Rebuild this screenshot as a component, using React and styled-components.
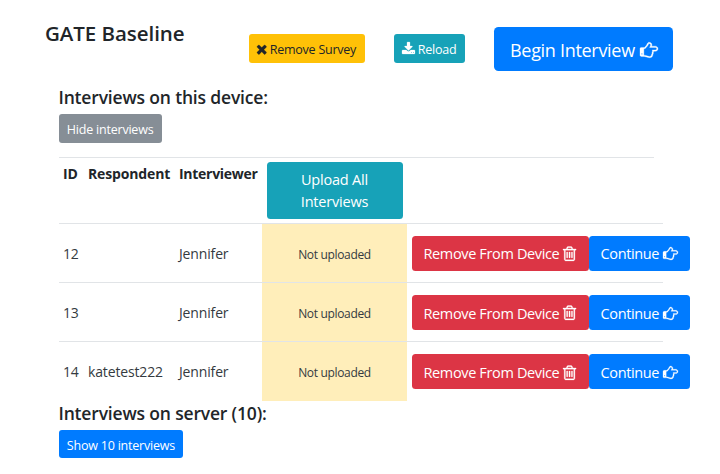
import React from "react";
import styled, { createGlobalStyle } from "styled-components";

const GlobalStyle = createGlobalStyle`
  * { box-sizing: border-box; }
  body {
    margin: 0;
    background: #fff;
    color: #212529;
    font-family: "Open Sans", "Noto Sans", sans-serif;
  }
`;

const Page = styled.main`
  width: 720px;
  height: 474px;
  overflow: hidden;
`;

const Header = styled.header`
  display: flex;
  align-items: flex-start;
  height: 87px;
  padding: 26px 0 0 45px;
`;

const Title = styled.h1`
  width: 204px;
  margin: -5px 0 0;
  font-size: 20.5px;
  line-height: 25px;
  font-weight: 600;
  white-space: nowrap;
  letter-spacing: -0.05px;
`;

const SubTitle = styled.h2`
  margin: 0;
  font-size: 17.5px;
  line-height: 20px;
  height: 20px;
  font-weight: 600;
  white-space: nowrap;
  letter-spacing: -0.17px;
`;

const tones = {
  warning: ["#ffc107", "#212529"],
  info: ["#17a2b8", "#fff"],
  primary: ["#007bff", "#fff"],
  secondary: ["#868e96", "#fff"],
  danger: ["#dc3545", "#fff"],
};

const Button = styled.button`
  display: flex;
  align-items: center;
  flex: none;
  gap: 4px;
  width: ${(p) => p.$width}px;
  height: 35px;
  margin: 0;
  padding: 1px 0 0 12px;
  border: 0;
  border-radius: 3.5px;
  background: ${(p) => tones[p.$tone][0]};
  color: ${(p) => tones[p.$tone][1]};
  font-family: inherit;
  font-size: 14.5px;
  letter-spacing: ${(p) => p.$tracking || "-0.36px"};
  white-space: nowrap;
`;

const SmallButton = styled(Button)`
  height: 28.5px;
  padding: 2px 0 0 8.3px;
  border-radius: 3px;
  font-size: 12.5px;
  letter-spacing: -0.21px;
`;

const RemoveSurvey = styled(SmallButton)`
  gap: 3px;
  margin: 8px 29px 0 0;
  letter-spacing: -0.25px;
`;

const Reload = styled(SmallButton)`
  gap: 3px;
  margin: 8px 29px 0 0;
  letter-spacing: -0.25px;
`;

const LargeButton = styled(Button)`
  gap: 5px;
  height: 44px;
  margin-top: 0.5px;
  padding: 2px 0 0 16px;
  border-radius: 4.5px;
  font-size: 18px;
  letter-spacing: -0.3px;
`;

const Glyph = styled.svg`
  flex: none;
  height: ${(p) => p.$size}px;
  width: auto;
  overflow: visible;
  fill: currentColor;
  stroke: currentColor;
  stroke-width: 30;
`;

const Section = styled.section`
  display: flex;
  flex-direction: column;
  align-items: flex-start;
  gap: 7px;
  padding-left: 58.5px;
`;

const Table = styled.div`
  margin: 14px 0 2.2px;
`;

const Row = styled.div`
  display: grid;
  grid-template-columns: 25px 91px 87.5px 145px 256px;
  align-items: center;
  width: 604.5px;
  height: 59.4px;
  border-top: 1px solid #e1e4e7;
`;

const HeadRow = styled(Row)`
  width: 595.5px;
  height: 66px;
  align-items: start;
`;

const Cell = styled.div`
  padding: 2px 0 0 4.5px;
  font-size: 14px;
  line-height: 20px;
  color: #343a40;
  white-space: nowrap;
  letter-spacing: -0.15px;
`;

const HeadCell = styled(Cell)`
  padding-top: 6px;
  color: #212529;
  font-weight: 700;
  letter-spacing: ${(p) => p.$tracking || "-0.15px"};
`;

const UploadCell = styled.div`
  padding: 4px 0 0 4.5px;
`;

const UploadButton = styled(Button)`
  justify-content: center;
  height: 57px;
  padding: 2px 0 0;
  line-height: 22px;
  text-align: center;
`;

const Status = styled.div`
  display: flex;
  align-items: center;
  justify-content: center;
  align-self: stretch;
  padding-top: 3px;
  background: #ffeeba;
  font-size: 12px;
  letter-spacing: -0.33px;
  color: #343a40;
`;

const Actions = styled.div`
  display: flex;
  padding: 1px 0 0 4.5px;
`;

const icons = {
  times: {
    box: "302 128 1188 1536",
    d: "M1490 1322q0 40-28 68l-136 136q-28 28-68 28t-68-28l-294-294-294 294q-28 28-68 28t-68-28l-136-136q-28-28-28-68t28-68l294-294-294-294q-28-28-28-68t28-68l136-136q28-28 68-28t68 28l294 294 294-294q28-28 68-28t68 28l136 136q28 28 28 68t-28 68l-294 294 294 294q28 28 28 68z",
  },
  download: {
    box: "64 0 1664 1792",
    d: "M1344 1344q0-26-19-45t-45-19-45 19-19 45 19 45 45 19 45-19 19-45zm256 0q0-26-19-45t-45-19-45 19-19 45 19 45 45 19 45-19 19-45zm128-224v320q0 40-28 68t-68 28h-1472q-40 0-68-28t-28-68v-320q0-40 28-68t68-28h465l135 136q58 56 136 56t136-56l136-136h464q40 0 68 28t28 68zm-325-569q17 41-14 70l-448 448q-18 19-45 19t-45-19l-448-448q-31-29-14-70 17-39 59-39h256v-448q0-26 19-45t45-19h256q26 0 45 19t19 45v448h256q42 0 59 39z",
  },
  hand: {
    box: "0 0 1792 1792",
    d: "M256 1280q0-26-19-45t-45-19-45 19-19 45 19 45 45 19 45-19 19-45zm1408-512q0-52-38-90t-90-38h-576q0-20 15-48.5t33-55 33-68 15-84.5q0-67-44.5-97.5t-115.5-30.5q-24 0-90 139-24 44-37 65-40 64-112 145-71 81-101 106-69 57-140 57h-32v640h32q72 0 167 32t193.5 64 179.5 32q189 0 189-167 0-26-5-56 30-16 47.5-52.5t17.5-73.5-18-69q53-50 53-119 0-25-10-55.5t-25-47.5h331q52 0 90-38t38-90zm128-1q0 105-75.5 181t-180.5 76h-169q-4 62-37 119 3 21 3 43 0 101-60 178 1 139-85 219.5t-227 80.5q-133 0-322-69-164-59-223-59h-288q-53 0-90.5-37.5t-37.5-90.5v-640q0-53 37.5-90.5t90.5-37.5h288q10 0 21.5-4.5t23.5-14 22.5-18 24-22.5 20.5-21.5 19-21.5 14-17q65-74 100-129 13-21 33-62t37-72 40.5-63 55-49.5 69.5-17.5q125 0 206.5 67t81.5 189q0 68-22 128h374q104 0 180 76t76 179z",
  },
  trash: {
    box: "192 64 1408 1664",
    d: "M704 736v576q0 14-9 23t-23 9h-64q-14 0-23-9t-9-23v-576q0-14 9-23t23-9h64q14 0 23 9t9 23zm256 0v576q0 14-9 23t-23 9h-64q-14 0-23-9t-9-23v-576q0-14 9-23t23-9h64q14 0 23 9t9 23zm256 0v576q0 14-9 23t-23 9h-64q-14 0-23-9t-9-23v-576q0-14 9-23t23-9h64q14 0 23 9t9 23zm128 724v-948h-896v948q0 22 7 40.5t14.5 27 10.5 8.5h832q3 0 10.5-8.5t14.5-27 7-40.5zm-672-1076h448l-48-117q-7-9-17-11h-317q-10 2-17 11zm928 32v64q0 14-9 23t-23 9h-96v948q0 83-47 143.5t-113 60.5h-832q-66 0-113-58.5t-47-141.5v-952h-96q-14 0-23-9t-9-23v-64q0-14 9-23t23-9h309l70-167q15-37 54-63t79-26h320q40 0 79 26t54 63l70 167h309q14 0 23 9t9 23z",
  },
};

function Icon({ name, size }) {
  return (
    <Glyph $size={size} viewBox={icons[name].box} aria-hidden="true">
      <path d={icons[name].d} />
    </Glyph>
  );
}

const interviews = [
  { id: 12, respondent: "", interviewer: "Jennifer" },
  { id: 13, respondent: "", interviewer: "Jennifer" },
  { id: 14, respondent: "katetest222", interviewer: "Jennifer" },
];

export default function App() {
  return (
    <Page>
      <GlobalStyle />
      <Header>
        <Title>GATE Baseline</Title>
        <RemoveSurvey $tone="warning" $width={115.5}>
          <Icon name="times" size={12.3} />
          <span>Remove Survey</span>
        </RemoveSurvey>
        <Reload $tone="info" $width={71.5}>
          <Icon name="download" size={14} />
          <span>Reload</span>
        </Reload>
        <LargeButton $tone="primary" $width={179}>
          <span>Begin Interview</span>
          <Icon name="hand" size={18} />
        </LargeButton>
      </Header>
      <Section>
        <SubTitle>Interviews on this device:</SubTitle>
        <SmallButton $tone="secondary" $width={103}>Hide interviews</SmallButton>
      </Section>
      <Section>
        <Table>
          <HeadRow>
            <HeadCell>ID</HeadCell>
            <HeadCell>Respondent</HeadCell>
            <HeadCell $tracking="-0.28px">Interviewer</HeadCell>
            <UploadCell>
              <UploadButton $tone="info" $width={136} $tracking="-0.2px">
                Upload All<br />Interviews
              </UploadButton>
            </UploadCell>
          </HeadRow>
          {interviews.map((item) => (
            <Row key={item.id}>
              <Cell>{item.id}</Cell>
              <Cell>{item.respondent}</Cell>
              <Cell>{item.interviewer}</Cell>
              <Status>Not uploaded</Status>
              <Actions>
                <Button $tone="danger" $width={177}>
                  <span>Remove From Device</span>
                  <Icon name="trash" size={15.5} />
                </Button>
                <Button $tone="primary" $width={101}>
                  <span>Continue</span>
                  <Icon name="hand" size={15} />
                </Button>
              </Actions>
            </Row>
          ))}
        </Table>
      </Section>
      <Section>
        <SubTitle>Interviews on server (10):</SubTitle>
        <SmallButton $tone="primary" $width={124.5}>Show 10 interviews</SmallButton>
      </Section>
    </Page>
  );
}
